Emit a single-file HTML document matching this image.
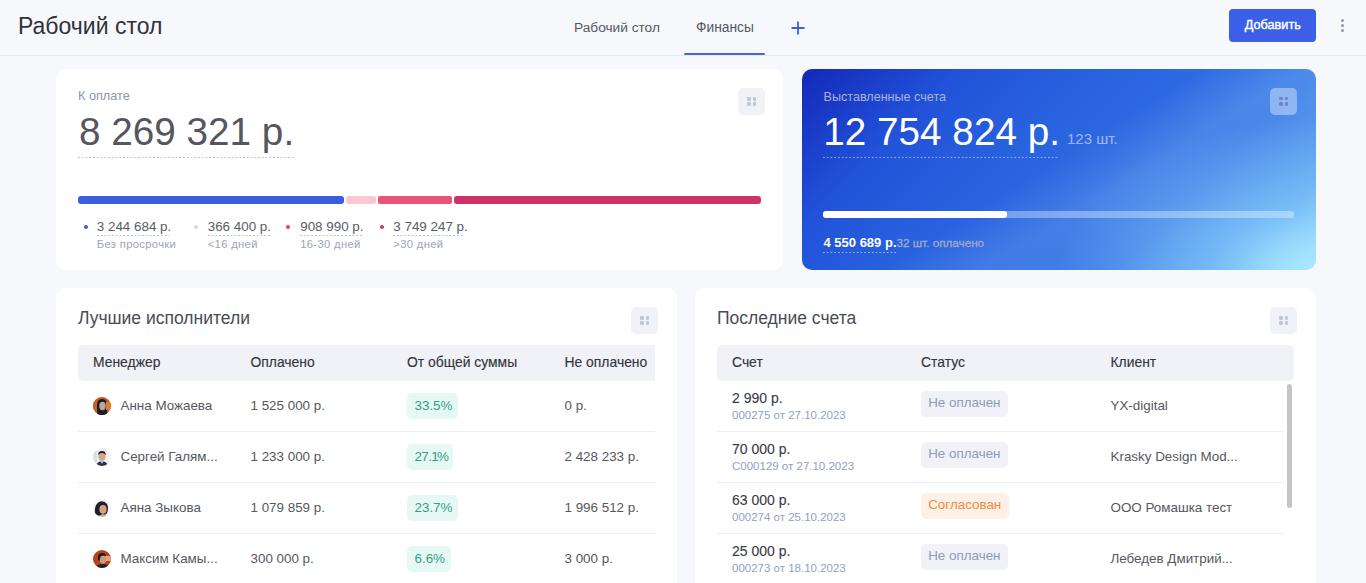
<!DOCTYPE html>
<html><head><meta charset="utf-8">
<style>
*{box-sizing:border-box;margin:0;padding:0}
html,body{width:1366px;height:583px;overflow:hidden;background:#f7f8fc;font-family:"Liberation Sans",sans-serif;color:#4a4b55}
.abs{position:absolute}
.t{position:absolute;white-space:nowrap;line-height:1}
.hdr{position:absolute;left:0;top:0;width:1366px;height:56px;border-bottom:1px solid #e7e9f0;background:#f7f8fc}
.card{position:absolute;background:#fff;border-radius:10px;overflow:hidden}
.drag{position:absolute;width:27px;height:27px;border-radius:5px;background:#f0f2f7}
.drag i{position:absolute;width:3.5px;height:3.6px;border-radius:1.2px;background:#c0c7d5}
.dash{position:absolute;height:1px;background-image:linear-gradient(90deg,#bcc2d0 0,#bcc2d0 50%,transparent 50%,transparent 100%);background-size:3.75px 1px}
.th{position:absolute;height:36px;background:#f0f2f8}
.row{position:absolute;height:1px;background:#eceef3}
.badge{position:absolute;height:25px;border-radius:5px}
.av{position:absolute;width:18px;height:18px;border-radius:50%;overflow:hidden}
</style></head><body>
<div class="hdr"></div>
<div class="t" style="left:18px;top:15.03px;font-size:23px;color:#31323a;">Рабочий стол</div>
<div class="t" style="left:574px;top:21.20px;font-size:13.7px;color:#565760;">Рабочий стол</div>
<div class="t" style="left:696px;top:21.12px;font-size:13.8px;color:#565760;">Финансы</div>
<div class="abs" style="left:684px;top:53px;width:81px;height:2px;border-radius:1px;background:#4066e6"></div>
<svg class="abs" style="left:790.4px;top:20.4px" width="16" height="16" viewBox="0 0 16 16"><path d="M8 1.5V14.5M1.5 8H14.5" stroke="#3a5de6" stroke-width="1.8"/></svg>
<div class="abs" style="left:1229px;top:9px;width:87.4px;height:32.6px;border-radius:4px;background:#3b5fe6"></div>
<div class="t" style="left:1244.8px;top:19.15px;font-size:12.7px;color:#fff;-webkit-text-stroke:0.4px #fff">Добавить</div>
<div class="abs" style="left:1340.8px;top:18.5px;width:3.1px;height:3.1px;border-radius:50%;background:#9197aa"></div>
<div class="abs" style="left:1340.8px;top:23.900000000000002px;width:3.1px;height:3.1px;border-radius:50%;background:#9197aa"></div>
<div class="abs" style="left:1340.8px;top:29.3px;width:3.1px;height:3.1px;border-radius:50%;background:#9197aa"></div>
<div class="card" style="left:56px;top:69px;width:727.4px;height:201px"></div>
<div class="drag" style="left:738px;top:88px"><i style="left:9.2px;top:9px"></i><i style="left:14.6px;top:9px"></i><i style="left:9.2px;top:14.4px"></i><i style="left:14.6px;top:14.4px"></i></div>
<div class="t" style="left:78px;top:90.45px;font-size:12.7px;color:#8b94ab;">К оплате</div>
<div class="t" style="left:79px;top:113.24px;font-size:38.7px;color:#55565f;">8 269 321 р.</div>
<div class="dash" style="left:78px;top:157.3px;width:216px"></div>
<div class="abs" style="left:78px;top:196px;width:266px;height:8px;border-radius:3px;background:#3a5de3"></div>
<div class="abs" style="left:346px;top:196px;width:30px;height:8px;border-radius:2px;background:#fdc8d4"></div>
<div class="abs" style="left:378px;top:196px;width:74px;height:8px;border-radius:2px;background:#ea5479"></div>
<div class="abs" style="left:454px;top:196px;width:307px;height:8px;border-radius:3px;background:#cf3268"></div>
<div class="abs" style="left:83.6px;top:225px;width:4px;height:4px;border-radius:50%;background:#3a5de3"></div>
<div class="t" style="left:96.8px;top:219.86px;font-size:13.4px;color:#585c68;">3 244 684 р.</div>
<div class="dash" style="left:96.8px;top:235.3px;width:72px"></div>
<div class="t" style="left:96.8px;top:238.62px;font-size:11.2px;color:#9ba4bb;letter-spacing:0.35px">Без просрочки</div>
<div class="abs" style="left:193.7px;top:225px;width:4px;height:4px;border-radius:50%;background:#fdc8d4"></div>
<div class="t" style="left:207.7px;top:219.86px;font-size:13.4px;color:#585c68;">366 400 р.</div>
<div class="dash" style="left:207.7px;top:235.3px;width:62px"></div>
<div class="t" style="left:207.7px;top:238.62px;font-size:11.2px;color:#9ba4bb;letter-spacing:0.35px">&lt;16 дней</div>
<div class="abs" style="left:286.3px;top:225px;width:4px;height:4px;border-radius:50%;background:#e0406e"></div>
<div class="t" style="left:300.2px;top:219.86px;font-size:13.4px;color:#585c68;">908 990 р.</div>
<div class="dash" style="left:300.2px;top:235.3px;width:62px"></div>
<div class="t" style="left:300.2px;top:238.62px;font-size:11.2px;color:#9ba4bb;letter-spacing:0.35px">16-30 дней</div>
<div class="abs" style="left:379.9px;top:225px;width:4px;height:4px;border-radius:50%;background:#cf3268"></div>
<div class="t" style="left:393.3px;top:219.86px;font-size:13.4px;color:#585c68;">3 749 247 р.</div>
<div class="dash" style="left:393.3px;top:235.3px;width:70px"></div>
<div class="t" style="left:393.3px;top:238.62px;font-size:11.2px;color:#9ba4bb;letter-spacing:0.35px">&gt;30 дней</div>
<div class="card" style="left:802px;top:69px;width:514px;height:201px;background:radial-gradient(ellipse 50% 75% at 100% 100%,rgba(172,232,255,.95) 0%,rgba(140,210,252,.55) 40%,rgba(90,160,245,0) 100%),linear-gradient(148deg,rgba(255,255,255,0) 48%,rgba(205,232,255,.14) 60%,rgba(255,255,255,.04) 74%,rgba(255,255,255,0) 85%),linear-gradient(135deg,#1428b8 0%,#2152d9 22%,#2861de 40%,#2d6ae2 55%,#3a7ce7 72%,#5ea6f0 88%,#a2e2ff 100%)"></div>
<div class="t" style="left:823.5px;top:90.53px;font-size:12.6px;color:#a9b3d8;">Выставленные счета</div>
<div class="t" style="left:823.3px;top:112.54px;font-size:38.7px;color:#fff;">12 754 824 р.</div>
<div class="t" style="left:1067px;top:131.30px;font-size:15px;color:rgba(255,255,255,0.55);">123 шт.</div>
<div class="dash" style="left:823px;top:157.4px;width:236px;background-image:linear-gradient(90deg,rgba(255,255,255,.45) 0,rgba(255,255,255,.45) 50%,transparent 50%,transparent 100%)"></div>
<div class="abs" style="left:823px;top:211px;width:471px;height:7px;border-radius:3px;background:rgba(255,255,255,0.35)"></div>
<div class="abs" style="left:823px;top:211px;width:184px;height:7px;border-radius:3px;background:#fff"></div>
<div class="t" style="left:823.5px;top:235.70px;font-size:13px;color:#fff;font-weight:700">4 550 689 р.</div>
<div class="t" style="left:896.5px;top:236.80px;font-size:11.7px;color:#a4abc6;-webkit-text-stroke:0.3px #a4abc6">32 шт. оплачено</div>
<div class="dash" style="left:823px;top:252px;width:73px;background-image:linear-gradient(90deg,rgba(255,255,255,.5) 0,rgba(255,255,255,.5) 50%,transparent 50%,transparent 100%)"></div>
<div class="abs" style="left:1270px;top:87.6px;width:27.3px;height:27.4px;border-radius:5px;background:rgba(255,255,255,0.38)"><i style="position:absolute;width:3.8px;height:3.7px;border-radius:1.3px;background:rgba(105,125,195,.85);left:9px;top:9.1px"></i><i style="position:absolute;width:3.8px;height:3.7px;border-radius:1.3px;background:rgba(105,125,195,.85);left:14.6px;top:9.1px"></i><i style="position:absolute;width:3.8px;height:3.7px;border-radius:1.3px;background:rgba(105,125,195,.85);left:9px;top:14.5px"></i><i style="position:absolute;width:3.8px;height:3.7px;border-radius:1.3px;background:rgba(105,125,195,.85);left:14.6px;top:14.5px"></i></div>
<div class="card" style="left:56px;top:288px;width:621px;height:320px"></div>
<div class="drag" style="left:631px;top:307px"><i style="left:9.2px;top:9px"></i><i style="left:14.6px;top:9px"></i><i style="left:9.2px;top:14.4px"></i><i style="left:14.6px;top:14.4px"></i></div>
<div class="t" style="left:78px;top:309.69px;font-size:17.5px;color:#4a4b55;">Лучшие исполнители</div>
<div class="th" style="left:78px;top:345px;width:577px;border-radius:5px 0 0 5px"></div>
<div class="t" style="left:93px;top:355.53px;font-size:13.9px;color:#34353d;-webkit-text-stroke:0.15px #34353d">Менеджер</div>
<div class="t" style="left:250.5px;top:355.53px;font-size:13.9px;color:#34353d;-webkit-text-stroke:0.15px #34353d">Оплачено</div>
<div class="t" style="left:407px;top:355.53px;font-size:13.9px;color:#34353d;-webkit-text-stroke:0.15px #34353d">От общей суммы</div>
<div class="t" style="left:564.5px;top:355.53px;font-size:13.9px;color:#34353d;-webkit-text-stroke:0.15px #34353d">Не оплачено</div>
<svg class="av" style="left:93px;top:397px" width="18" height="18" viewBox="0 0 18 18"><rect width="18" height="18" fill="#b8582a"/><rect x="0" y="0" width="7" height="18" fill="#c8602c"/><path d="M4 18V8Q4 2 9 2Q14 2 14 8V18Z" fill="#1c1d26"/><ellipse cx="9.5" cy="9" rx="3.2" ry="4.2" fill="#b9aaa0"/><rect x="13" y="5" width="5" height="8" fill="#e07a35"/><path d="M2 18Q9 12 16 18Z" fill="#1a1c2a"/></svg>
<div class="t" style="left:120.5px;top:399.16px;font-size:13.4px;color:#565760;">Анна Можаева</div>
<div class="t" style="left:250.5px;top:399.16px;font-size:13.4px;color:#565760;">1 525 000 р.</div>
<div class="badge" style="left:407.3px;top:393.2px;width:51px;height:25.6px;background:#e6f8f3"></div>
<div class="t" style="left:414.5px;top:399.16px;font-size:13.4px;color:#35a081;">33.5%</div>
<div class="t" style="left:564.5px;top:399.16px;font-size:13.4px;color:#565760;">0 р.</div>
<div class="row" style="left:78px;top:431px;width:577px"></div>
<svg class="av" style="left:93px;top:448px" width="18" height="18" viewBox="0 0 18 18"><rect width="18" height="18" fill="#eef2f8"/><rect x="0" y="3" width="4" height="12" fill="#cfe3ef"/><ellipse cx="9" cy="8.5" rx="3.6" ry="4.4" fill="#d4a78a"/><path d="M5.2 7Q5 3 9 3Q13 3 12.8 7Q11 4.8 9 5Q7 4.8 5.2 7Z" fill="#2a2020"/><path d="M3 18Q4 13 9 13.5Q14 13 15 18Z" fill="#2b2f48"/><path d="M8 13.5L9 16L10 13.5Z" fill="#fff"/></svg>
<div class="t" style="left:120.5px;top:450.16px;font-size:13.4px;color:#565760;">Сергей Галям...</div>
<div class="t" style="left:250.5px;top:450.16px;font-size:13.4px;color:#565760;">1 233 000 р.</div>
<div class="badge" style="left:407.3px;top:444.2px;width:46px;height:25.6px;background:#e6f8f3"></div>
<div class="t" style="left:414.5px;top:450.16px;font-size:13.4px;color:#35a081;"><span style="letter-spacing:-0.6px">27.</span><span style="letter-spacing:-1.8px">1</span>%</div>
<div class="t" style="left:564.5px;top:450.16px;font-size:13.4px;color:#565760;">2 428 233 р.</div>
<div class="row" style="left:78px;top:482px;width:577px"></div>
<svg class="av" style="left:93px;top:499px" width="18" height="18" viewBox="0 0 18 18"><rect width="18" height="18" fill="#f2f4f8"/><path d="M2 14Q1 6 6 3Q11 1 14 5Q16 9 14 14Q12 17 8 17Q4 17 2 14Z" fill="#1e1f2a"/><ellipse cx="10" cy="10.5" rx="3.6" ry="4.4" fill="#d5a07c"/><path d="M6 17Q9 14 13 16L12 18H6Z" fill="#c9b7a8"/></svg>
<div class="t" style="left:120.5px;top:501.16px;font-size:13.4px;color:#565760;">Аяна Зыкова</div>
<div class="t" style="left:250.5px;top:501.16px;font-size:13.4px;color:#565760;">1 079 859 р.</div>
<div class="badge" style="left:407.3px;top:495.2px;width:51px;height:25.6px;background:#e6f8f3"></div>
<div class="t" style="left:414.5px;top:501.16px;font-size:13.4px;color:#35a081;">23.7%</div>
<div class="t" style="left:564.5px;top:501.16px;font-size:13.4px;color:#565760;">1 996 512 р.</div>
<div class="row" style="left:78px;top:533px;width:577px"></div>
<svg class="av" style="left:93px;top:550px" width="18" height="18" viewBox="0 0 18 18"><rect width="18" height="18" fill="#b8401c"/><rect x="12" y="6" width="6" height="5" fill="#e8a080"/><ellipse cx="10" cy="9.5" rx="3.3" ry="4.2" fill="#c99a7e"/><path d="M5 10Q4 3 9 3Q13 3 13 6Q10 5 7.5 6.5Q7 9 6.5 11Z" fill="#1d1c24"/><path d="M2 18Q5 13.5 10 14Q15 14 16 18Z" fill="#1f2030"/></svg>
<div class="t" style="left:120.5px;top:552.16px;font-size:13.4px;color:#565760;">Максим Камы...</div>
<div class="t" style="left:250.5px;top:552.16px;font-size:13.4px;color:#565760;">300 000 р.</div>
<div class="badge" style="left:407.3px;top:546.2px;width:44px;height:25.6px;background:#e6f8f3"></div>
<div class="t" style="left:414.5px;top:552.16px;font-size:13.4px;color:#35a081;">6.6%</div>
<div class="t" style="left:564.5px;top:552.16px;font-size:13.4px;color:#565760;">3 000 р.</div>
<div class="card" style="left:695px;top:288px;width:621px;height:320px"></div>
<div class="drag" style="left:1270px;top:307px"><i style="left:9.2px;top:9px"></i><i style="left:14.6px;top:9px"></i><i style="left:9.2px;top:14.4px"></i><i style="left:14.6px;top:14.4px"></i></div>
<div class="t" style="left:717px;top:309.69px;font-size:17.5px;color:#4a4b55;">Последние счета</div>
<div class="th" style="left:717px;top:345px;width:577px;border-radius:5px"></div>
<div class="t" style="left:732px;top:355.53px;font-size:13.9px;color:#34353d;-webkit-text-stroke:0.15px #34353d">Счет</div>
<div class="t" style="left:921px;top:355.53px;font-size:13.9px;color:#34353d;-webkit-text-stroke:0.15px #34353d">Статус</div>
<div class="t" style="left:1110.5px;top:355.53px;font-size:13.9px;color:#34353d;-webkit-text-stroke:0.15px #34353d">Клиент</div>
<div class="t" style="left:732px;top:391.15px;font-size:14px;color:#393a44;-webkit-text-stroke:0.1px #393a44">2 990 р.</div>
<div class="t" style="left:732px;top:409.57px;font-size:11.5px;color:#93a0c2;">000275 от 27.10.2023</div>
<div class="badge" style="left:920.5px;top:391.2px;width:87.3px;height:25.8px;background:#f0f2f7"></div>
<div class="t" style="left:928.2px;top:396.26px;font-size:13.4px;color:#8f9bb9;">Не оплачен</div>
<div class="t" style="left:1110.5px;top:399.26px;font-size:13.4px;color:#565760;">YX-digital</div>
<div class="row" style="left:717px;top:431px;width:567px"></div>
<div class="t" style="left:732px;top:442.15px;font-size:14px;color:#393a44;-webkit-text-stroke:0.1px #393a44">70 000 р.</div>
<div class="t" style="left:732px;top:460.57px;font-size:11.5px;color:#93a0c2;">C000129 от 27.10.2023</div>
<div class="badge" style="left:920.5px;top:442.2px;width:87.3px;height:25.8px;background:#f0f2f7"></div>
<div class="t" style="left:928.2px;top:447.26px;font-size:13.4px;color:#8f9bb9;">Не оплачен</div>
<div class="t" style="left:1110.5px;top:450.26px;font-size:13.4px;color:#565760;">Krasky Design Mod...</div>
<div class="row" style="left:717px;top:482px;width:567px"></div>
<div class="t" style="left:732px;top:493.15px;font-size:14px;color:#393a44;-webkit-text-stroke:0.1px #393a44">63 000 р.</div>
<div class="t" style="left:732px;top:511.57px;font-size:11.5px;color:#93a0c2;">000274 от 25.10.2023</div>
<div class="badge" style="left:920.5px;top:493.2px;width:88px;height:25.8px;background:#fdf0e6"></div>
<div class="t" style="left:928.2px;top:498.26px;font-size:13.4px;color:#f08a3c;">Согласован</div>
<div class="t" style="left:1110.5px;top:501.26px;font-size:13.4px;color:#565760;">ООО Ромашка тест</div>
<div class="row" style="left:717px;top:533px;width:567px"></div>
<div class="t" style="left:732px;top:544.15px;font-size:14px;color:#393a44;-webkit-text-stroke:0.1px #393a44">25 000 р.</div>
<div class="t" style="left:732px;top:562.57px;font-size:11.5px;color:#93a0c2;">000273 от 18.10.2023</div>
<div class="badge" style="left:920.5px;top:544.2px;width:87.3px;height:25.8px;background:#f0f2f7"></div>
<div class="t" style="left:928.2px;top:549.26px;font-size:13.4px;color:#8f9bb9;">Не оплачен</div>
<div class="t" style="left:1110.5px;top:552.26px;font-size:13.4px;color:#565760;">Лебедев Дмитрий...</div>
<div class="abs" style="left:1287px;top:384px;width:4.5px;height:124px;border-radius:3px;background:#c4c4c6"></div>
</body></html>
